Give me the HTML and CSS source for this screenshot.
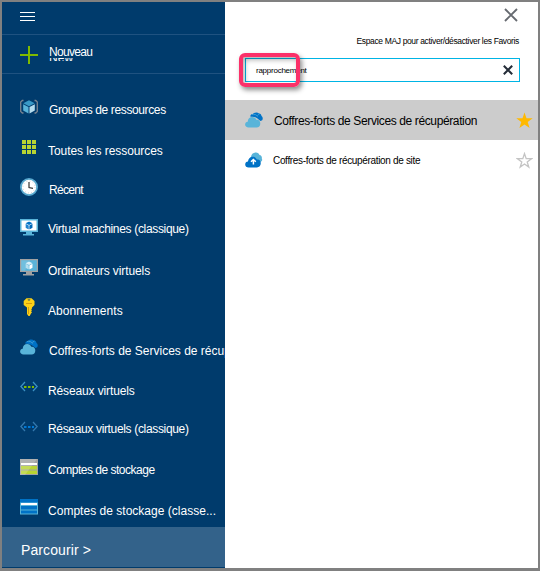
FILE: index.html
```html
<!DOCTYPE html>
<html lang="fr">
<head>
<meta charset="utf-8">
<title>Parcourir</title>
<link rel="stylesheet" href="styles.css">
</head>
<body>
<svg class="defs" width="0" height="0">
  <symbol id="cloud" viewBox="0 0 18 16"><path d="M4.8 15.2H3.6C1.6 15.2.2 14 .2 12.2c0-1.7 1.2-2.8 2.8-2.9.1-2.7 2-4.8 4.7-4.8 2 0 3.5 1 4.2 2.8 2.200-.5 3.900 1.200 3.900 3.500 0 2.500-1.500 4.400-3.900 4.400z"/></symbol>
  <symbol id="cube" viewBox="0 0 12 14"><path class="cube-top" d="M6 .3 11.700 3.200 6 6.200.3 3.200z"/><path class="cube-left" d="M.2 4.200 5.500 7v6.600L.2 10.600z"/><path class="cube-right" d="M11.800 4.200 6.500 7v6.600l5.300-3z"/></symbol>
  <symbol id="vault" viewBox="0 0 18 16"><path fill="#0072c6" d="M5.500 4.800C5 2.500 6.500 2 7.800 2.300 8.800.2 12.500-.1 14 1.500c1.500.2 2.500 1.200 2.500 2.600 1.500.9 1.700 3.700.2 4.500l-1.400.5C13 6.500 10 4 5.500 4.800z"/><path d="M7 2.500c2.500-.7 4.500.2 5.500 2M14.500 2c-1 .3-1.700.8-2 1.700" fill="none" stroke="#4fa7d8" stroke-width=".8"/><path fill="#59b4d9" d="M3.500 15.500C1.500 15.500.1 14.300.1 12.600c0-1.600 1.100-2.700 2.600-2.800.1-2.800 2-4.800 4.500-4.800 2 0 3.500 1.100 4.200 2.800 2.500-.4 3.900 1.500 3.900 3.700 0 2.400-1.500 4-3.700 4z"/></symbol>
</svg>
<div class="frame">
  <nav class="sidebar">
    <div class="menu"><svg width="15" height="9" viewBox="0 0 15 9"><path d="M0 .5h15M0 4.500h15M0 8.500h15" stroke="#fff"/></svg></div>
    <div class="new">
      <svg width="18" height="18" viewBox="0 0 18 18"><path d="M9 0v18M0 9h18" stroke="#7fba00" stroke-width="2"/></svg>
      <div class="new-label"><span class="new-text">Nouveau</span><span class="new-under">New</span></div>
    </div>
    <ul class="items">
      <li class="item"><svg class="icon" viewBox="0 0 18 18"><path d="M3.500 2.500H2.300L.7 4v9.500L2.300 15h1.200M14.500 2.500h1.200L17.300 4v9.500L15.700 15h-1.200" fill="none" stroke="#7a8490" stroke-width="1.300"/><use href="#cube" class="cube-blue" x="3" y="2" width="12" height="14"/></svg><span class="label l1">Groupes de ressources</span></li>
      <li class="item"><svg class="icon" viewBox="0 0 18 18"><path fill="#b8d432" d="M2 2h4v4H2zM7 2h4v4H7zM12 2h4v4h-4zM2 7h4v4H2zM7 7h4v4H7zM12 7h4v4h-4zM2 12h4v4H2zM7 12h4v4H7zM12 12h4v4h-4z"/></svg><span class="label l2">Toutes les ressources</span></li>
      <li class="item"><svg class="icon" viewBox="0 0 18 18"><circle cx="9" cy="9" r="8.100" fill="#fff" stroke="#59a9cf" stroke-width="1.800"/><circle cx="9" cy="9" r="6" fill="none" stroke="#b8bec4" stroke-dasharray=".7 2.440" stroke-width="1"/><path d="M9 4v5.500l4 .8" fill="none" stroke="#333" stroke-width="1.200"/></svg><span class="label l3">Récent</span></li>
      <li class="item"><svg class="icon" viewBox="0 0 18 18"><path fill="#59b4d9" d="M0 1h18v13h-6v2h2v1.500H3V16h3v-2H0z"/><path fill="#fff" d="M1.500 2.500h15v10h-15z"/><use href="#cube" class="cube-dark" x="5.300" y="3.200" width="7.500" height="8.500"/></svg><span class="label l4">Virtual machines (classique)</span></li>
      <li class="item"><svg class="icon" viewBox="0 0 18 18"><path fill="#a0a1a2" d="M0 1h18v13h-6v2h2v1.500H3V16h3v-2H0z"/><path fill="#59b4d9" d="M1.200 2.200h15.600v10.600H1.200z"/><path fill="#fff" opacity=".15" d="M1.200 2.200h9L5 12.800H1.200z"/><use href="#cube" class="cube-light" x="5.300" y="3.200" width="7.500" height="8.500"/></svg><span class="label l5">Ordinateurs virtuels</span></li>
      <li class="item"><svg class="icon" viewBox="0 0 18 18"><path fill="#fcd116" fill-rule="evenodd" d="M6.500.3h5L14.500 3v4L12 9.500v1l-.8.8.8.9-1 1 1 1-1 1.300L9.700 18H8.500L7 16V9.500L3.700 7V3zM7.600 1.500a1.300 1 0 1 0 2.800 0z"/><path d="M6 5.500h6M8.500 9v7" stroke="#c68b10" stroke-width=".8"/></svg><span class="label l6">Abonnements</span></li>
      <li class="item"><svg class="icon vault" viewBox="0 0 18 16"><use href="#vault"/></svg><span class="label l7">Coffres-forts de Services de récupération</span></li>
      <li class="item"><svg class="icon" viewBox="0 0 18 18"><path d="M5 4 .8 8.500 5 13M13 4l4.200 4.500L13 13" fill="none" stroke="#3c91c2" stroke-width="1.300"/><path fill="#7fba00" d="M4 8h2.500v2H4zM8 8h2.500v2H8zM12 8h2v2h-2z"/></svg><span class="label l8">Réseaux virtuels</span></li>
      <li class="item"><svg class="icon" viewBox="0 0 18 18"><path d="M5 4 .8 8.500 5 13M13 4l4.200 4.500L13 13" fill="none" stroke="#3479ad" stroke-width="1.300"/><path fill="#0078d4" d="M4 8h2.500v2H4zM8 8h2.500v2H8zM12 8h2v2h-2z"/></svg><span class="label l9">Réseaux virtuels (classique)</span></li>
      <li class="item"><svg class="icon" viewBox="0 0 18 18"><path fill="#a0a1a2" d="M0 1h18v16H0z"/><path fill="#fff" d="M1 5h16v2H1z"/><path fill="#b8d432" d="M1 8h16v3.500H1zM1 12.500h16V16H1z"/><path fill="#fff" opacity=".18" d="M0 1h17L5 17H0z"/></svg><span class="label l10">Comptes de stockage</span></li>
      <li class="item"><svg class="icon" viewBox="0 0 18 18"><path fill="#59b4d9" d="M0 1h18v15.500H0z"/><path fill="#0072c6" d="M0 1h18v3.500H0zM1 8h16v3.500H1zM1 12.500h16v3H1z"/><path fill="#fff" d="M1 5h16v2H1z"/></svg><span class="label l11">Comptes de stockage (classe...</span></li>
    </ul>
    <div class="browse"><span>Parcourir &gt;</span></div>
  </nav>
  <main class="panel">
    <div class="close"><svg width="14" height="14" viewBox="0 0 14 14"><path d="M1 1l12 12M13 1 1 13" stroke="#666a70" stroke-width="1.900"/></svg></div>
    <div class="hint"><span>Espace MAJ pour activer/désactiver les Favoris</span></div>
    <div class="search">
      <span class="query">rapprochement</span>
      <svg width="10" height="10" viewBox="0 0 10 10"><path d="M.8.8l8.400 8.400M9.200.8.8 9.200" stroke="#252d38" stroke-width="2"/></svg>
      <div class="highlight"></div>
    </div>
    <div class="result selected"><svg class="icon vault" viewBox="0 0 18 16"><use href="#vault"/></svg><span class="name r1">Coffres-forts de Services de récupération</span><svg class="star" viewBox="0 0 17 17"><path fill="#ffb900" d="M8.500.4l2 5.800h6.200l-5 3.800 1.900 6.100-5.100-3.700-5.100 3.700L5.300 10l-5-3.800h6.200z"/></svg></div>
    <div class="result"><svg class="icon vault" viewBox="0 0 18 16"><path fill="#59b4d9" d="M6 5C6.200 2.300 8 .7 10.500.5c2-.2 3.500.8 4 2.500 1.800.3 2.700 1.800 2.300 3.500.9 1.500.2 2.900-1.300 3.500L10 9z"/><use href="#cloud" fill="#0072c6" y=".3" width="18" height="16"/><path d="M8.400 12.500V8M6 9.800 8.400 7.500l2.400 2.300" fill="none" stroke="#fff" stroke-width="1.500"/></svg><span class="name r2">Coffres-forts de récupération de site</span><svg class="star" viewBox="0 0 17 17"><path fill="none" stroke="#c4c4c4" stroke-width="1.300" d="M8.500 1.600l1.700 5.100h5.300l-4.300 3.200 1.600 5.200-4.300-3.100-4.300 3.100 1.600-5.200-4.300-3.200h5.300z"/></svg></div>
  </main>
</div>
</body>
</html>
```
FILE: styles.css
```css
* { box-sizing: border-box; }
body { margin: 0; font-family: "Liberation Sans", Arial, sans-serif; font-size: 12px; }
.defs { display: block; height: 0; }
.frame { display: flex; width: 540px; height: 571px; border: 2px solid #808080; border-bottom-width: 3px; background: #fff; }
.sidebar { display: flex; flex-direction: column; width: 223px; height: 566px; background: #003b6c; color: #fff; overflow: hidden; }
.menu { height: 33px; padding: 10px 0 0 18px; border-bottom: 1px solid #1f5280; }
.menu svg { display: block; }
.new { display: flex; height: 39px; padding: 11px 0 0 18px; border-bottom: 1px solid #1f5280; }
.new-label { display: flex; flex-direction: column; margin-left: 11px; white-space: nowrap; }
.new-text { height: 12px; line-height: 12px; letter-spacing: -.7px; }
.new-under { display: flex; align-items: flex-end; height: 3px; line-height: 5px; letter-spacing: .1px; overflow: hidden; }
.items { list-style: none; margin: 0; padding: 13px 0 0; height: 453px; }
.item { display: flex; align-items: center; height: 40px; padding-left: 18px; white-space: nowrap; }
.icon { flex: none; width: 18px; height: 18px; }
.icon.vault { height: 16px; }
.label { margin-left: 10px; line-height: 14px; padding-top: 7px; }
.cube-blue { --top: #3999c6; --left: #59b4d9; --right: #b5dcee; }
.cube-dark { --top: #0072c6; --left: #1f83cf; --right: #0068b8; }
.cube-light { --top: #d9eff8; --left: #b5dfef; --right: #fff; }
.cube-top { fill: var(--top); }
.cube-left { fill: var(--left); }
.cube-right { fill: var(--right); }
.l1 { margin-left: 11px; padding-top: 6px; letter-spacing: -.38px; }
.l2 { padding-top: 8px; letter-spacing: -.06px; }
.l3 { margin-left: 11px; padding-top: 6px; letter-spacing: -.7px; }
.l4 { padding-top: 4px; letter-spacing: -.33px; }
.l5 { padding-top: 8px; letter-spacing: -.1px; }
.l6 { padding-top: 8px; letter-spacing: .07px; }
.l7 { margin-left: 11px; padding-top: 8px; letter-spacing: 0; }
.l8 { padding-top: 8px; letter-spacing: -.13px; }
.l9 { padding-top: 4px; letter-spacing: -.34px; }
.l10 { padding-top: 6px; letter-spacing: -.5px; }
.l11 { padding-top: 8px; letter-spacing: .02px; }
.browse { display: flex; align-items: center; height: 40px; padding: 6px 0 0 19px; background: #33628a; font-size: 14px; letter-spacing: .1px; }
.panel { width: 313px; }
.close { display: flex; justify-content: flex-end; height: 31px; padding: 6px 20px 0 0; }
.hint { display: flex; justify-content: flex-end; height: 25px; padding-right: 19px; font-size: 8.5px; line-height: 17px; letter-spacing: -.36px; color: #000; white-space: nowrap; }
.search { position: relative; display: flex; align-items: center; justify-content: space-between; width: 275px; height: 24px; margin-left: 20px; padding: 0 6px 0 10px; border: 1px solid #00b4e4; }
.query { font-size: 8px; letter-spacing: -.25px; color: #000; }
.highlight { position: absolute; left: -7px; top: -6px; width: 61px; height: 34px; border: 4px solid #fb3069; border-radius: 6px; box-shadow: 2px 3px 5px rgba(0,0,0,.45), inset 2px 3px 5px rgba(0,0,0,.3); }
.result { display: flex; align-items: center; height: 40px; padding: 0 5px 0 20px; color: #000; white-space: nowrap; }
.selected { margin-top: 18px; background: #ccc; }
.name { flex: 1; margin-left: 11px; padding-top: 2px; }
.r1 { letter-spacing: -.38px; }
.r2 { margin-left: 10px; padding-top: 1px; font-size: 10px; letter-spacing: -.33px; }
.star { width: 17px; height: 17px; }
```
